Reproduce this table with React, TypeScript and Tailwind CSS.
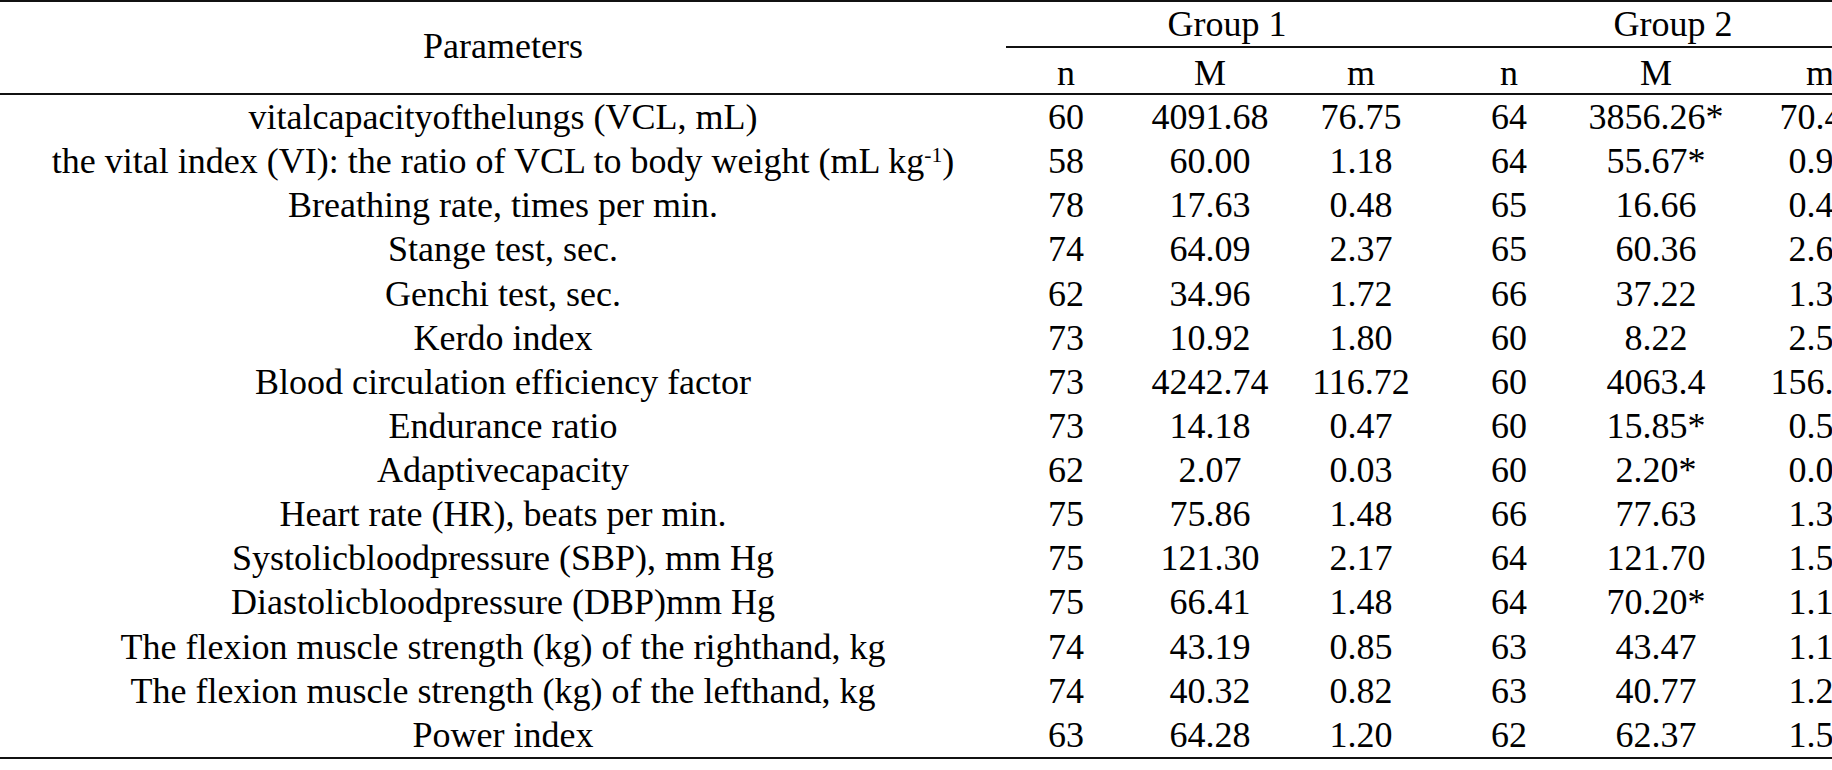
import React from 'react'

type Row = {
  name: React.ReactNode
  n1: string
  M1: string
  m1: string
  n2: string
  M2: string
  m2: string
}

const rows: Row[] = [
  { name: 'vitalcapacityofthelungs (VCL, mL)', n1: '60', M1: '4091.68', m1: '76.75', n2: '64', M2: '3856.26*', m2: '70.42' },
  {
    name: (
      <>
        the vital index (VI): the ratio of VCL to body weight (mL kg<sup className="text-[0.6em]">-1</sup>)
      </>
    ),
    n1: '58', M1: '60.00', m1: '1.18', n2: '64', M2: '55.67*', m2: '0.98',
  },
  { name: 'Breathing rate, times per min.', n1: '78', M1: '17.63', m1: '0.48', n2: '65', M2: '16.66', m2: '0.45' },
  { name: 'Stange test, sec.', n1: '74', M1: '64.09', m1: '2.37', n2: '65', M2: '60.36', m2: '2.61' },
  { name: 'Genchi test, sec.', n1: '62', M1: '34.96', m1: '1.72', n2: '66', M2: '37.22', m2: '1.38' },
  { name: 'Kerdo index', n1: '73', M1: '10.92', m1: '1.80', n2: '60', M2: '8.22', m2: '2.54' },
  { name: 'Blood circulation efficiency factor', n1: '73', M1: '4242.74', m1: '116.72', n2: '60', M2: '4063.4', m2: '156.21' },
  { name: 'Endurance ratio', n1: '73', M1: '14.18', m1: '0.47', n2: '60', M2: '15.85*', m2: '0.56' },
  { name: 'Adaptivecapacity', n1: '62', M1: '2.07', m1: '0.03', n2: '60', M2: '2.20*', m2: '0.04' },
  { name: 'Heart rate (HR), beats per min.', n1: '75', M1: '75.86', m1: '1.48', n2: '66', M2: '77.63', m2: '1.35' },
  { name: 'Systolicbloodpressure (SBP), mm Hg', n1: '75', M1: '121.30', m1: '2.17', n2: '64', M2: '121.70', m2: '1.52' },
  { name: 'Diastolicbloodpressure (DBP)mm Hg', n1: '75', M1: '66.41', m1: '1.48', n2: '64', M2: '70.20*', m2: '1.13' },
  { name: 'The flexion muscle strength (kg) of the righthand, kg', n1: '74', M1: '43.19', m1: '0.85', n2: '63', M2: '43.47', m2: '1.14' },
  { name: 'The flexion muscle strength (kg) of the lefthand, kg', n1: '74', M1: '40.32', m1: '0.82', n2: '63', M2: '40.77', m2: '1.23' },
  { name: 'Power index', n1: '63', M1: '64.28', m1: '1.20', n2: '62', M2: '62.37', m2: '1.55' },
]

const cols = 'grid grid-cols-[1006px_120px_168px_154px_122px_172px_156px]'

export default function App() {
  return (
    <div className="w-[1832px] h-[770px] overflow-hidden bg-white text-black">
      <div
        className="w-[1898px] text-[36px] border-t-2 border-b-2 border-[#111]"
        style={{ fontFamily: '"Liberation Serif", "Times New Roman", serif' }}
      >
        {/* Header */}
        <div className={`${cols} grid-rows-[46px_45px] border-b-2 border-[#111]`}>
          <div className="row-span-2 flex items-center justify-center pb-[4px] leading-none">Parameters</div>
          <div className="col-span-3 flex items-center justify-center border-b-2 border-[#111] leading-none">Group 1</div>
          <div className="col-span-3 flex items-center justify-center border-b-2 border-[#111] leading-none">Group 2</div>
          <div className="flex items-center justify-center pt-[4px] leading-none">n</div>
          <div className="flex items-center justify-center pt-[4px] leading-none">M</div>
          <div className="flex items-center justify-center pt-[4px] pr-[20px] leading-none">m</div>
          <div className="flex items-center justify-center pt-[4px] leading-none">n</div>
          <div className="flex items-center justify-center pt-[4px] leading-none">M</div>
          <div className="flex items-center justify-center pt-[4px] leading-none">m</div>
        </div>

        {/* Body */}
        {rows.map((r, i) => (
          <div key={i} className={`${cols} h-[44.13px] leading-[44.13px] text-center whitespace-nowrap`}>
            <div>{r.name}</div>
            <div>{r.n1}</div>
            <div>{r.M1}</div>
            <div className="pr-[20px]">{r.m1}</div>
            <div>{r.n2}</div>
            <div>{r.M2}</div>
            <div>{r.m2}</div>
          </div>
        ))}
      </div>
    </div>
  )
}
